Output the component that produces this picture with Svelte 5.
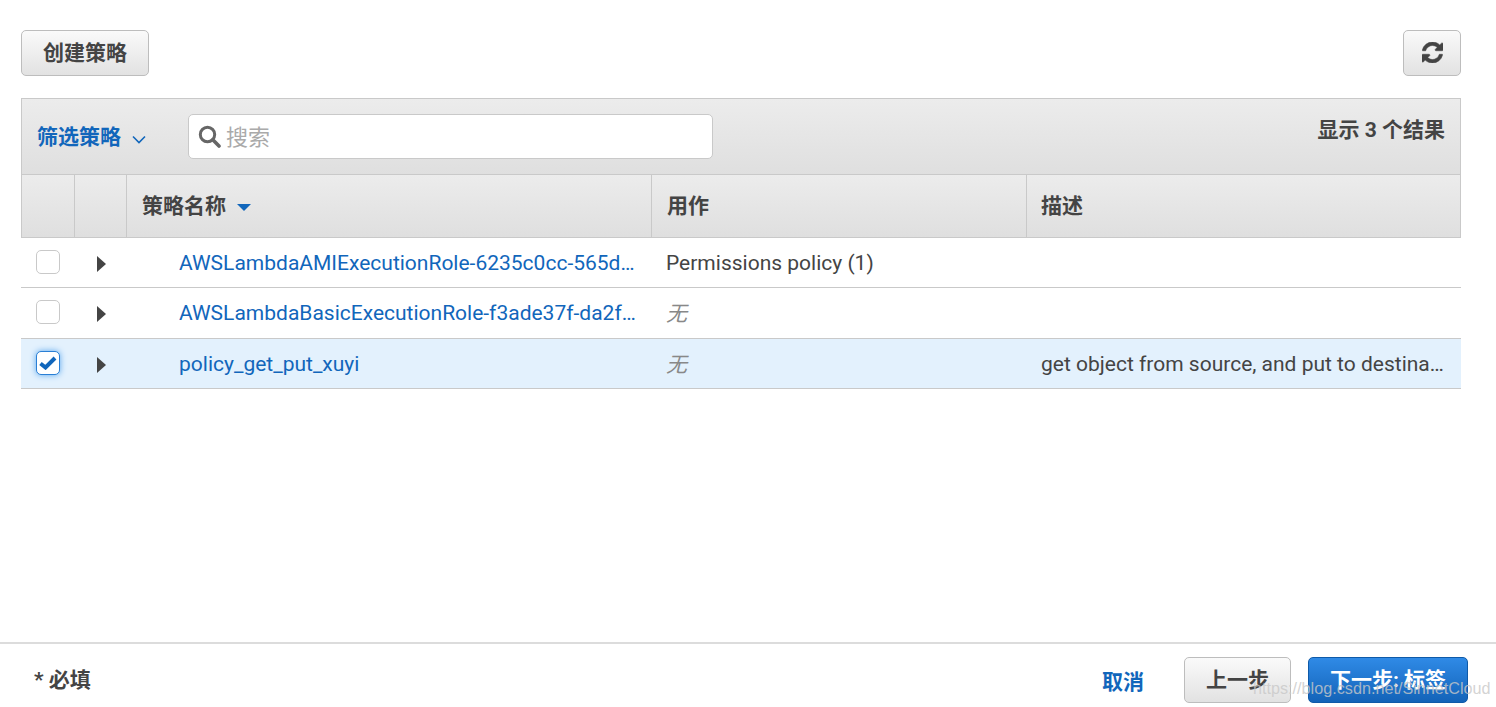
<script>
  const rows = [
    { name: 'AWSLambdaAMIExecutionRole-6235c0cc-565d-4a8f-9d1e-policy', use: 'Permissions policy (1)', none: false, desc: '', checked: false },
    { name: 'AWSLambdaBasicExecutionRole-f3ade37f-da2f-4c1b-8e77-policy', use: '无', none: true, desc: '', checked: false },
    { name: 'policy_get_put_xuyi', use: '无', none: true, desc: 'get object from source, and put to destination bucket', checked: true }
  ];
</script>

<div class="page">
  <main class="content">
    <div class="actions">
      <button class="btn create">创建策略</button>
      <button class="btn refresh" aria-label="刷新">
        <svg viewBox="0 0 1536 1536" width="21" height="21" fill="#444" stroke="#444" stroke-width="40"><path d="M1511 928q0 5-1 7-64 268-268 434.500t-478 166.500q-146 0-282.500-55t-243.500-157l-129 129q-19 19-45 19t-45-19-19-45v-448q0-26 19-45t45-19h448q26 0 45 19t19 45-19 45l-137 137q71 66 161 102t187 36q134 0 250-65t186-179q11-17 53-117 8-23 30-23h192q13 0 22.500 9.500t9.500 22.500zm25-800v448q0 26-19 45t-45 19h-448q-26 0-45-19t-19-45 19-45l138-138q-148-137-349-137-134 0-250 65t-186 179q-11 17-53 117-8 23-30 23h-199q-13 0-22.500-9.500t-9.500-22.500v-7q65-268 270-434.500t480-166.500q146 0 284 55.500t245 156.500l130-129q19-19 45-19t45 19 19 45z"/></svg>
      </button>
    </div>

    <section class="table">
      <div class="toolbar">
        <button class="filter">筛选策略
          <svg width="14" height="9" viewBox="0 0 14 9" fill="none" stroke="#1166bb" stroke-width="1.6"><path d="M1 1.500 7 7.500 13 1.500"/></svg>
        </button>
        <div class="search">
          <svg width="23" height="23" viewBox="0 0 23 23" fill="none" stroke="#666"><circle cx="9.500" cy="9.500" r="7.200" stroke-width="3"/><path d="M14.800 14.800 21 21" stroke-width="3.600" stroke-linecap="round"/></svg>
          <span>搜索</span>
        </div>
        <div class="count">显示 3 个结果</div>
      </div>

      <div class="row head">
        <div class="cell c1"></div>
        <div class="cell c2"></div>
        <div class="cell c3"><span class="ht">策略名称</span> <i class="sort"></i></div>
        <div class="cell c4"><span class="ht">用作</span></div>
        <div class="cell c5"><span class="ht">描述</span></div>
      </div>

      {#each rows as r}
        <div class="row body" class:sel={r.checked}>
          <div class="cell c1"><span class="check" class:on={r.checked}>
            {#if r.checked}
              <svg viewBox="0 0 18 14" width="18" height="14" fill="none" stroke="#1166bb" stroke-width="4"><path d="M1.500 7.500 6.500 11.500 16 2"/></svg>
            {/if}
          </span></div>
          <div class="cell c2"><i class="caret"></i></div>
          <div class="cell c3"><a href="#top">{r.name}</a></div>
          <div class="cell c4" class:none={r.none}><span>{r.use}</span></div>
          <div class="cell c5">{r.desc}</div>
        </div>
      {/each}
    </section>
  </main>

  <footer class="footer">
    <div class="req">* 必填</div>
    <div class="foot-actions">
      <button class="cancel">取消</button>
      <button class="btn prev">上一步</button>
      <button class="btn primary">下一步: 标签</button>
    </div>
  </footer>
  <div class="watermark">https://blog.csdn.net/SinnetCloud</div>
</div>

<style>
  :global(body) { margin: 0; background: #fff; }
  .page {
    position: relative;
    height: 707px;
    overflow: hidden;
    display: flex;
    flex-direction: column;
    font-family: Roboto, "Noto Sans CJK SC", sans-serif;
    font-size: 21px;
    color: #444;
  }
  .content { flex: 1; padding: 30px 35px 0 21px; }
  .actions { display: flex; justify-content: space-between; margin-bottom: 22px; }
  .btn {
    box-sizing: border-box;
    height: 46px;
    border: 1px solid #bdbdbd;
    border-radius: 5px;
    background: linear-gradient(#fafafa, #e2e2e2);
    font: bold 21px Roboto, "Noto Sans CJK SC", sans-serif;
    color: #444;
    padding: 0 0 4px;
    display: flex;
    align-items: center;
    justify-content: center;
  }
  .create { width: 128px; }
  .refresh { width: 58px; padding: 0 0 2px; }
  .toolbar {
    box-sizing: border-box;
    height: 77px;
    display: flex;
    align-items: flex-start;
    background: linear-gradient(#ececec, #dfdfdf);
    border: 1px solid #c9c9c9;
  }
  .filter {
    display: flex;
    align-items: center;
    gap: 11px;
    border: 0;
    background: none;
    padding: 0;
    margin: 24px 0 0 15px;
    width: 151px;
    font: bold 21px Roboto, "Noto Sans CJK SC", sans-serif;
    color: #1166bb;
    line-height: 28px;
  }
  .filter svg { margin-top: 4px; }
  .search {
    box-sizing: border-box;
    width: 525px;
    height: 45px;
    margin-top: 15px;
    border: 1px solid #c9c9c9;
    border-radius: 5px;
    background: #fff;
    display: flex;
    align-items: center;
    padding: 0 0 4px 9px;
    gap: 5px;
    color: #aaa;
    font-size: 22px;
  }
  .search svg { margin-top: 4px; }
  .count {
    margin-left: auto;
    margin-top: 17px;
    padding-right: 15px;
    font-weight: bold;
    font-size: 21px;
    line-height: 28px;
    color: #444;
  }
  .row { display: flex; box-sizing: border-box; }
  .head {
    height: 63px;
    background: linear-gradient(#ececec, #dfdfdf);
    border: 1px solid #c9c9c9;
    border-top: 0;
    font-weight: bold;
    font-size: 21px;
  }
  .head .cell { border-right: 1px solid #c9c9c9; }
  .head .cell:last-child { border-right: 0; }
  .head .c3, .head .c4 { padding-left: 15px; }
  .head .c5 { padding-left: 14px; }
  .ht { margin-top: -4px; }
  .cell { box-sizing: border-box; display: flex; align-items: center; min-width: 0; }
  .c1 { width: 53px; flex: none; }
  .c2 { width: 52px; flex: none; }
  .c3 { width: 525px; flex: none; }
  .c4 { width: 375px; flex: none; }
  .c5 { flex: 1; }
  .body {
    height: 50px;
    border-bottom: 1px solid #c9c9c9;
    padding: 0 1px;
    color: #444;
  }
  .body:nth-child(4) { height: 51px; }
  .body .c1 { padding-left: 14px; }
  .body .c2 { padding-left: 22px; padding-top: 2px; }
  .body .c3 { padding: 0 15px 0 52px; }
  .body .c4 { padding-left: 14px; }
  .body .c5 { padding: 0 16px 0 14px; display: block; line-height: 51px; white-space: nowrap; overflow: hidden; text-overflow: ellipsis; }
  .body a {
    color: #1166bb;
    text-decoration: none;
    white-space: nowrap;
    overflow: hidden;
    text-overflow: ellipsis;
  }
  .none { color: #888; font-style: italic; }
  .none span { margin-top: -2px; }
  .sel { background: #e3f1fd; }
  .check {
    box-sizing: border-box;
    width: 24px;
    height: 24px;
    border: 1px solid #c9c9c9;
    border-radius: 5px;
    background: #fff;
    display: flex;
    align-items: center;
    justify-content: center;
    margin-top: -2px;
  }
  .check.on {
    border-color: #2a7fd5;
    box-shadow: 0 0 6px #5aa7ee;
  }
  .caret {
    width: 0;
    height: 0;
    border-left: 9px solid #444;
    border-top: 8px solid transparent;
    border-bottom: 8px solid transparent;
  }
  .sort {
    display: inline-block;
    width: 0;
    height: 0;
    margin-left: 11px;
    margin-top: 2px;
    border-top: 7px solid #1166bb;
    border-left: 7px solid transparent;
    border-right: 7px solid transparent;
  }
  .footer {
    box-sizing: border-box;
    height: 65px;
    border-top: 2px solid #dcdcdc;
    display: flex;
    justify-content: space-between;
    padding: 13px 28px 0 34px;
  }
  .req { font-weight: bold; font-size: 21px; line-height: 46px; }
  .foot-actions { display: flex; align-items: flex-start; }
  .cancel {
    border: 0;
    background: none;
    padding: 0;
    height: 46px;
    margin-right: 40px;
    font: bold 21px Roboto, "Noto Sans CJK SC", sans-serif;
    color: #1166bb;
  }
  .prev { width: 107px; margin-right: 17px; }
  .primary {
    width: 160px;
    color: #fff;
    border-color: #0f5aa8;
    background: linear-gradient(#2f8ae6, #1363b8);
  }
  .watermark {
    position: absolute;
    left: 1253px;
    top: 678px;
    font: 16.200px/20px "Liberation Sans", sans-serif;
    color: rgba(200, 200, 200, 0.8);
    white-space: nowrap;
  }
</style>
